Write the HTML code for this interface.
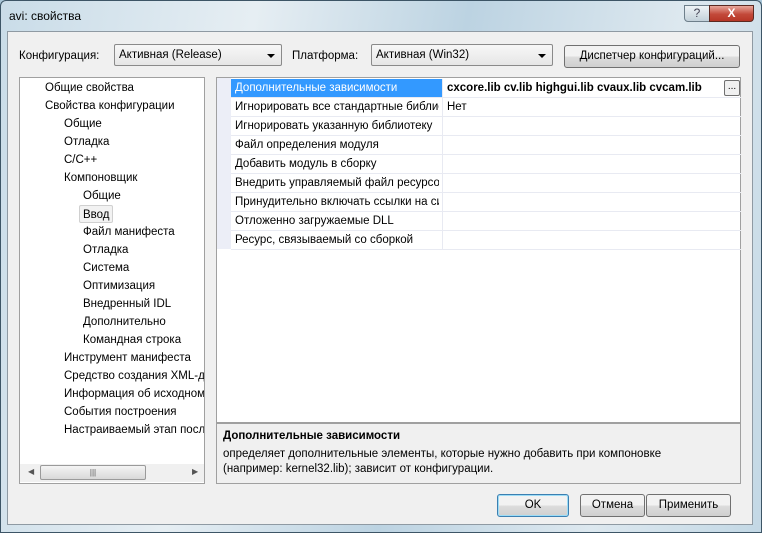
<!DOCTYPE html>
<html><head><meta charset="utf-8"><style>
*{box-sizing:border-box;margin:0;padding:0}
body{width:762px;height:533px;overflow:hidden;font-family:"Liberation Sans",sans-serif;font-size:11.5px;color:#000;position:relative;background:#a9c6d8}
.frame{position:absolute;left:0;top:0;width:762px;height:533px;background:linear-gradient(100deg,#c9dce8,#e6eef3 30%,#bcd3e2 55%,#dde8ef 80%,#c3d8e5);border:1px solid #3d5566;border-radius:6px 6px 0 0}
.client{position:absolute;left:7px;top:31px;width:746px;height:494px;background:#f0f0f0;border:1px solid #8f9aa3}
.a{position:absolute;white-space:nowrap}
.combo{position:absolute;height:22px;background:#fff;border:1px solid #8a8a8a;border-radius:2px;background:linear-gradient(#f7f7f7,#e6e6e6);padding:4px 4px 0}
.arr{position:absolute;right:6px;top:9px;width:0;height:0;border-left:4px solid transparent;border-right:4px solid transparent;border-top:4px solid #000}
.btn{position:absolute;height:23px;border:1px solid #707070;border-radius:3px;background:linear-gradient(#f2f2f2 50%,#dddddd 50%,#cfcfcf);text-align:center;line-height:21px}
.box{position:absolute;background:#fff;border:1px solid #a0a0a0}
.row{position:absolute;left:14px;width:510px;height:19px;border-bottom:1px solid #e8eaf2}
.row span{position:absolute;left:4px;top:3px;width:204px;overflow:hidden;white-space:nowrap}
.row i{position:absolute;left:211px;top:0;width:1px;height:18px;background:#e8eaf2}
</style></head><body>
<div class="frame"></div>
<div class="a" style="left:9px;top:9px;font-size:12px">avi: свойства</div>
<div style="position:absolute;left:684px;top:5px;width:26px;height:17px;border:1px solid #6e7f8b;border-radius:0 0 0 4px;background:linear-gradient(#eef3f6,#c3d1da);text-align:center;font-size:12px;color:#445;line-height:15px">?</div>
<div style="position:absolute;left:709px;top:5px;width:45px;height:17px;border:1px solid #5b2a22;border-radius:0 0 4px 0;background:linear-gradient(#e8a79b,#c3493a 55%,#b63626);text-align:center;color:#fff;font-weight:bold;font-size:12px;line-height:15px">X</div>
<div class="client"></div>
<div class="a" style="left:19px;top:50px">Конфигурация:</div>
<div class="combo" style="left:114px;top:44px;width:168px">Активная (Release)<div class="arr"></div></div>
<div class="a" style="left:292px;top:50px">Платформа:</div>
<div class="combo" style="left:371px;top:44px;width:182px">Активная (Win32)<div class="arr"></div></div>
<div class="btn" style="left:564px;top:45px;width:176px">Диспетчер конфигураций...</div>

<div class="box" style="left:19px;top:77px;width:186px;height:407px">
<div class="a" style="left:25px;top:4px">Общие свойства</div>
<div class="a" style="left:25px;top:22px">Свойства конфигурации</div>
<div class="a" style="left:44px;top:40px">Общие</div>
<div class="a" style="left:44px;top:58px">Отладка</div>
<div class="a" style="left:44px;top:76px">C/C++</div>
<div class="a" style="left:44px;top:94px">Компоновщик</div>
<div class="a" style="left:63px;top:112px">Общие</div>
<div class="a" style="left:59px;top:127px;width:34px;height:18px;border:1px solid #d0d0d0;border-radius:2px;background:#f2f2f2;padding:3px 3px">Ввод</div>
<div class="a" style="left:63px;top:148px">Файл манифеста</div>
<div class="a" style="left:63px;top:166px">Отладка</div>
<div class="a" style="left:63px;top:184px">Система</div>
<div class="a" style="left:63px;top:202px">Оптимизация</div>
<div class="a" style="left:63px;top:220px">Внедренный IDL</div>
<div class="a" style="left:63px;top:238px">Дополнительно</div>
<div class="a" style="left:63px;top:256px">Командная строка</div>
<div class="a" style="left:44px;top:274px">Инструмент манифеста</div>
<div style="position:absolute;left:44px;top:292px;width:140px;overflow:hidden;white-space:nowrap">Средство создания XML-документов</div>
<div style="position:absolute;left:44px;top:310px;width:140px;overflow:hidden;white-space:nowrap">Информация об исходном коде</div>
<div class="a" style="left:44px;top:328px">События построения</div>
<div style="position:absolute;left:44px;top:346px;width:140px;overflow:hidden;white-space:nowrap">Настраиваемый этап после</div>
<div style="position:absolute;left:0;top:386px;width:184px;height:18px;background:#f0f0f0">
<div class="a" style="left:8px;top:3px;font-size:8px;color:#555">◀</div>
<div style="position:absolute;left:20px;top:1px;width:106px;height:15px;border:1px solid #9a9a9a;border-radius:2px;background:linear-gradient(#f4f4f4,#d8d8d8);text-align:center;font-size:8px;line-height:13px;color:#555">|||</div>
<div class="a" style="left:172px;top:3px;font-size:8px;color:#555">▶</div>
</div>
</div>

<div class="box" style="left:216px;top:77px;width:525px;height:346px">
<div style="position:absolute;left:0;top:0;width:14px;height:171px;background:#eceef7"></div>
<div class="row" style="top:1px"><span style="background:#3399ff;color:#fff;width:211px;left:0;top:0;height:18px;padding:3px 4px">Дополнительные зависимости</span><i></i><b class="a" style="left:216px;top:3px">cxcore.lib cv.lib highgui.lib cvaux.lib cvcam.lib</b>
<div style="position:absolute;left:493px;top:1px;width:16px;height:16px;border:1px solid #707070;border-radius:2px;background:#f0f0f0;text-align:center;font-size:10px;line-height:12px">...</div></div>
<div class="row" style="top:20px"><span>Игнорировать все стандартные библиотеки</span><i></i><div class="a" style="left:216px;top:3px">Нет</div></div>
<div class="row" style="top:39px"><span>Игнорировать указанную библиотеку</span><i></i></div>
<div class="row" style="top:58px"><span>Файл определения модуля</span><i></i></div>
<div class="row" style="top:77px"><span>Добавить модуль в сборку</span><i></i></div>
<div class="row" style="top:96px"><span>Внедрить управляемый файл ресурсов</span><i></i></div>
<div class="row" style="top:115px"><span>Принудительно включать ссылки на символы</span><i></i></div>
<div class="row" style="top:134px"><span>Отложенно загружаемые DLL</span><i></i></div>
<div class="row" style="top:153px"><span>Ресурс, связываемый со сборкой</span><i></i></div>
</div>
<div style="position:absolute;left:216px;top:422px;width:525px;height:62px;border:1px solid #a0a0a0;border-top:2px solid #a0a0a0;background:#f0f0f0">
<div class="a" style="left:6px;top:6px;font-weight:bold">Дополнительные зависимости</div>
<div class="a" style="left:6px;top:24px">определяет дополнительные элементы, которые нужно добавить при компоновке</div>
<div class="a" style="left:6px;top:39px">(например: kernel32.lib); зависит от конфигурации.</div>
</div>

<div class="btn" style="left:497px;top:494px;width:72px;border-color:#3c7fb1;box-shadow:inset 0 0 0 1px #9cdcf6">OK</div>
<div class="btn" style="left:580px;top:494px;width:65px">Отмена</div>
<div class="btn" style="left:646px;top:494px;width:85px">Применить</div>
</body></html>
